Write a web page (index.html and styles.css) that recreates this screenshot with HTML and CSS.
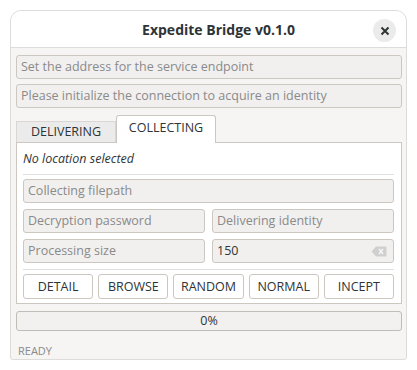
FILE: index.html
```html
<!doctype html>
<html>
<head>
  <meta charset='utf-8'>
  <title>Expedite Bridge</title>
  <link rel="stylesheet" href="styles.css">
</head>
<body>
<div class='window'>
  <div class='titlebar'>
    <span class='title'>Expedite Bridge v0.1.0</span>
    <span class='close'>
      <svg width='10' height='10' viewBox='0 0 10 10'><path d='M1.5 1.5 L8.5 8.5 M8.5 1.5 L1.5 8.5' stroke='#2e3436' stroke-width='2'/></svg>
    </span>
  </div>
  <div class='content'>
    <div class='entry hint'>Set the address for the service endpoint</div>
    <div class='entry hint'>Please initialize the connection to acquire an identity</div>
    <div class='notebook'>
      <div class='tabs'>
        <div class='tab'>DELIVERING</div>
        <div class='tab active'>COLLECTING</div>
      </div>
      <div class='page'>
        <div class='status-line'>No location selected</div>
        <div class='sep'></div>
        <div class='entry hint'>Collecting filepath</div>
        <div class='row'>
          <div class='entry hint'>Decryption password</div>
          <div class='entry hint'>Delivering identity</div>
        </div>
        <div class='row'>
          <div class='entry hint'>Processing size</div>
          <div class='entry value'>
            <span>150</span>
            <svg class='clear' width='16' height='11' viewBox='0 0 16 11'>
              <path d='M5 0.5 H14.5 a1 1 0 0 1 1 1 V9.5 a1 1 0 0 1 -1 1 H5 L0.5 5.5 Z' fill='#cfcfcf'/>
              <path d='M8 3 L12 8 M12 3 L8 8' stroke='#f4f4f4' stroke-width='1.6'/>
            </svg>
          </div>
        </div>
        <div class='sep lower'></div>
        <div class='buttons'>
          <div class='btn'>DETAIL</div>
          <div class='btn'>BROWSE</div>
          <div class='btn'>RANDOM</div>
          <div class='btn'>NORMAL</div>
          <div class='btn'>INCEPT</div>
        </div>
      </div>
    </div>
    <div class='progress'>0%</div>
    <div class='state'>READY</div>
  </div>
</div>
</body>
</html>
```

FILE: styles.css
```css
*{margin:0;padding:0;box-sizing:border-box;}
body{background:#fff;font-family:"Open Sans","Noto Sans",sans-serif;font-size:12.5px;color:#2e3436;}

.window{margin:10px;width:397px;height:350px;background:#f6f5f4;border:1px solid #dedcda;border-radius:11px 11px 3px 3px;overflow:hidden;}
.titlebar{position:relative;height:37px;padding-left:20px;background:#fff;border-bottom:1px solid #dedcda;display:flex;align-items:center;justify-content:center;}
.title{font-weight:bold;font-size:14px;color:#2e3436;}
.close{position:absolute;right:10px;top:8px;width:23px;height:23px;border-radius:50%;background:#ebebeb;display:flex;align-items:center;justify-content:center;}

.content{display:flex;flex-direction:column;padding:7px 4px 0 5px;}
.entry{height:24px;border:1px solid #cdc7c2;border-radius:3px;background:#f1f0ef;padding:0 4px;line-height:22px;white-space:nowrap;overflow:hidden;}
.entry + .entry{margin-top:5px;}
.hint{color:#8a8a8a;}

.notebook{margin-top:7px;}
.tabs{display:flex;align-items:flex-end;height:27px;}
.tab{width:100px;height:21px;line-height:20px;text-align:center;background:#ebebeb;border:1px solid #d9d6d3;border-bottom:none;color:#2e3436;}
.tab.active{height:28px;line-height:24px;background:#fff;border:1px solid #cdc7c2;border-bottom:none;border-radius:3px 3px 0 0;margin-bottom:-1px;position:relative;}
.page{background:#fff;border:1px solid #cdc7c2;padding:4px 7px 4px 6px;display:flex;flex-direction:column;}
.page .entry + .entry{margin-top:0;}
.status-line{font-style:italic;height:24px;line-height:24px;margin-bottom:3px;color:#2e3436;}
.sep{height:1px;background:#e2e0de;margin-bottom:4px;}
.sep.lower{margin-top:6px;}
.row{display:grid;grid-template-columns:1fr 1fr;gap:7px;margin-top:6px;}
.value{display:flex;align-items:center;justify-content:space-between;color:#2e3436;}
.clear{margin-right:2px;}

.buttons{display:flex;gap:5px;}
.btn{flex:1;height:25px;line-height:23px;text-align:center;border:1px solid #cdc7c2;border-radius:3px;background:#fff;color:#2e3436;}

.progress{margin-top:7px;height:20px;line-height:18px;text-align:center;border:1px solid #c0bcb8;border-radius:3px;background:#f2f1f0;}
.state{margin-top:12px;padding-left:2px;font-size:11px;line-height:15px;color:#8a8a8a;}
```
